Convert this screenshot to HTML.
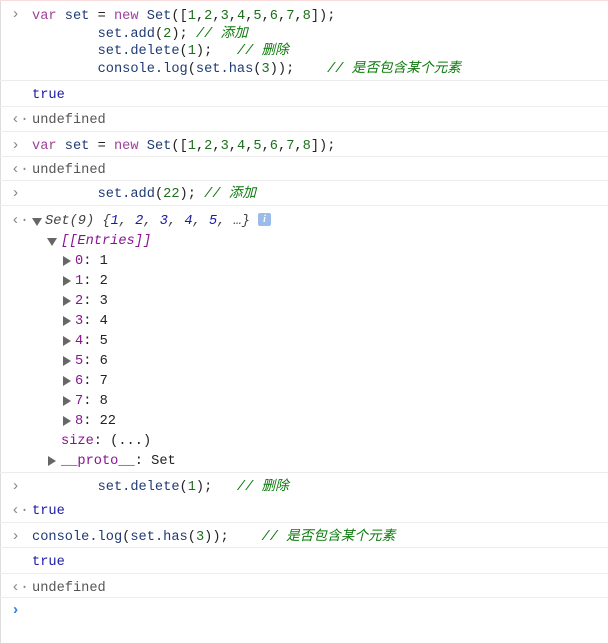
<!DOCTYPE html>
<html><head><meta charset="utf-8"><style>
body{margin:0;width:608px;height:643px;background:#fff;position:relative;overflow:hidden;font-family:"Liberation Mono","Noto Sans CJK SC",monospace;font-size:13.66px;}
.l{position:absolute;white-space:pre;line-height:16px;color:#222;margin-top:2px}
.sep{position:absolute;left:0;width:608px;height:1px;background:#ececec;}
.k{color:#a0409a}.v{color:#1f3a75}.n{color:#1c6e1c}.c{color:#0a7a0a;font-style:italic}.t{color:#1a1aa6}.u{color:#555}.p{color:#881391}.i{font-style:italic}
.pr{position:absolute;left:11px;color:#888;font-size:15px;line-height:16px;margin-top:1px}
.tri{position:absolute;width:0;height:0;margin-top:1px}
.tr{border-left:8px solid #666;border-top:5px solid transparent;border-bottom:5px solid transparent}
.td{border-top:8px solid #666;border-left:5px solid transparent;border-right:5px solid transparent}
</style></head><body>
<div style="position:absolute;left:0;top:0;width:1px;height:643px;background:#ddd"></div>
<div style="position:absolute;left:0;top:0;width:608px;height:1px;background:#fadcdc"></div>
<div class="pr" style="top:6px">›</div>
<div class="l" style="left:32px;top:7px"><span class="k">var</span> <span class="v">set</span> = <span class="k">new</span> <span class="v">Set</span>([<span class="n">1</span>,<span class="n">2</span>,<span class="n">3</span>,<span class="n">4</span>,<span class="n">5</span>,<span class="n">6</span>,<span class="n">7</span>,<span class="n">8</span>]);</div>
<div class="l" style="left:32px;top:25px">        <span class="v">set.add</span>(<span class="n">2</span>); <span class="c">// 添加</span></div>
<div class="l" style="left:32px;top:42px">        <span class="v">set.delete</span>(<span class="n">1</span>);   <span class="c">// 删除</span></div>
<div class="l" style="left:32px;top:60px">        <span class="v">console.log</span>(<span class="v">set.has</span>(<span class="n">3</span>));    <span class="c">// 是否包含某个元素</span></div>
<div class="sep" style="top:80px"></div>
<div class="l t" style="left:32px;top:86px">true</div>
<div class="sep" style="top:106px"></div>
<div class="pr" style="top:111px">‹·</div>
<div class="l u" style="left:32px;top:111px">undefined</div>
<div class="sep" style="top:131px"></div>
<div class="pr" style="top:137px">›</div>
<div class="l" style="left:32px;top:137px"><span class="k">var</span> <span class="v">set</span> = <span class="k">new</span> <span class="v">Set</span>([<span class="n">1</span>,<span class="n">2</span>,<span class="n">3</span>,<span class="n">4</span>,<span class="n">5</span>,<span class="n">6</span>,<span class="n">7</span>,<span class="n">8</span>]);</div>
<div class="sep" style="top:156px"></div>
<div class="pr" style="top:161px">‹·</div>
<div class="l u" style="left:32px;top:161px">undefined</div>
<div class="sep" style="top:180px"></div>
<div class="pr" style="top:185px">›</div>
<div class="l" style="left:32px;top:185px">        <span class="v">set.add</span>(<span class="n">22</span>); <span class="c">// 添加</span></div>
<div class="sep" style="top:205px"></div>
<div class="pr" style="top:212px">‹·</div>
<div class="tri td" style="left:32px;top:217px"></div>
<div class="l i" style="left:45px;top:212px;color:#444">Set(9) {<span class="t">1</span>, <span class="t">2</span>, <span class="t">3</span>, <span class="t">4</span>, <span class="t">5</span>, …}</div>
<div style="position:absolute;left:258px;top:213px;width:13px;height:13px;background:#9bbbe8;border-radius:2px;color:#fff;font:bold italic 10px 'Liberation Serif',serif;text-align:center;line-height:13px">i</div>
<div class="tri td" style="left:47px;top:237px"></div>
<div class="l p i" style="left:61px;top:232px">[[Entries]]</div>
<div class="tri tr" style="left:63px;top:255px"></div><div class="l" style="left:75px;top:252px"><span class="p">0</span>: 1</div>
<div class="tri tr" style="left:63px;top:275px"></div><div class="l" style="left:75px;top:272px"><span class="p">1</span>: 2</div>
<div class="tri tr" style="left:63px;top:295px"></div><div class="l" style="left:75px;top:292px"><span class="p">2</span>: 3</div>
<div class="tri tr" style="left:63px;top:315px"></div><div class="l" style="left:75px;top:312px"><span class="p">3</span>: 4</div>
<div class="tri tr" style="left:63px;top:335px"></div><div class="l" style="left:75px;top:332px"><span class="p">4</span>: 5</div>
<div class="tri tr" style="left:63px;top:355px"></div><div class="l" style="left:75px;top:352px"><span class="p">5</span>: 6</div>
<div class="tri tr" style="left:63px;top:375px"></div><div class="l" style="left:75px;top:372px"><span class="p">6</span>: 7</div>
<div class="tri tr" style="left:63px;top:395px"></div><div class="l" style="left:75px;top:392px"><span class="p">7</span>: 8</div>
<div class="tri tr" style="left:63px;top:415px"></div><div class="l" style="left:75px;top:412px"><span class="p">8</span>: 22</div>
<div class="l" style="left:61px;top:432px"><span class="p">size</span>: (...)</div>
<div class="tri tr" style="left:48px;top:455px"></div><div class="l" style="left:61px;top:452px"><span class="p">__proto__</span>: Set</div>
<div class="sep" style="top:472px"></div>
<div class="pr" style="top:478px">›</div>
<div class="l" style="left:32px;top:478px">        <span class="v">set.delete</span>(<span class="n">1</span>);   <span class="c">// 删除</span></div>
<div class="pr" style="top:502px">‹·</div>
<div class="l t" style="left:32px;top:502px">true</div>
<div class="sep" style="top:522px"></div>
<div class="pr" style="top:528px">›</div>
<div class="l" style="left:32px;top:528px"><span class="v">console.log</span>(<span class="v">set.has</span>(<span class="n">3</span>));    <span class="c">// 是否包含某个元素</span></div>
<div class="sep" style="top:547px"></div>
<div class="l t" style="left:32px;top:553px">true</div>
<div class="sep" style="top:573px"></div>
<div class="pr" style="top:579px">‹·</div>
<div class="l u" style="left:32px;top:579px">undefined</div>
<div class="sep" style="top:597px"></div>
<div class="pr" style="top:602px;color:#2b7de9;font-weight:bold">›</div>
</body></html>
